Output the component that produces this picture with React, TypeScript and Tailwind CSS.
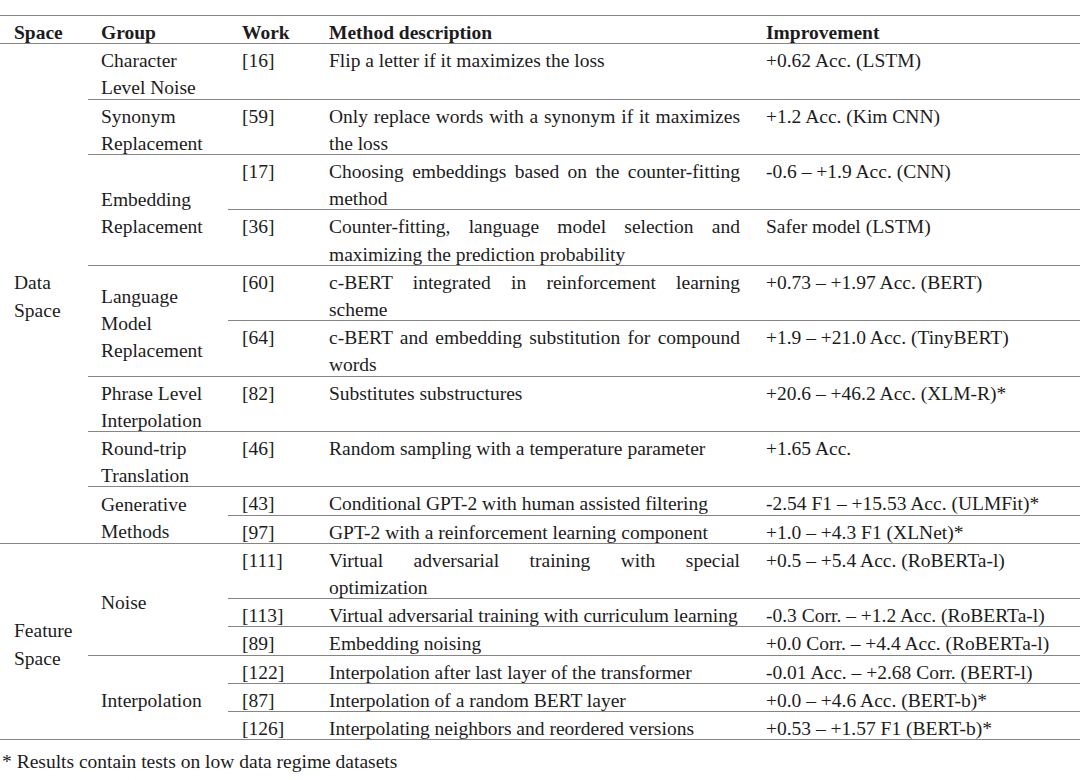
import React from 'react';

// Cell wrapper: glyphs in the reference sit low in their line box, so nudge them down
// without changing the row height.
const Txt: React.FC<{ children: React.ReactNode }> = ({ children }) => (
  <div className="pt-[3px] -mb-[3px]">{children}</div>
);

const LINE = 'border-b border-[#858585]';

interface Entry {
  work: string;
  method: string;
  result: string;
}

interface Group {
  name: React.ReactNode;
  entries: Entry[];
}

const DATA_SPACE: Group[] = [
  {
    name: (
      <>
        Character
        <br />
        Level Noise
      </>
    ),
    entries: [{ work: '[16]', method: 'Flip a letter if it maximizes the loss', result: '+0.62 Acc. (LSTM)' }],
  },
  {
    name: (
      <>
        Synonym
        <br />
        Replacement
      </>
    ),
    entries: [
      {
        work: '[59]',
        method: 'Only replace words with a synonym if it maximizes the loss',
        result: '+1.2 Acc. (Kim CNN)',
      },
    ],
  },
  {
    name: (
      <>
        Embedding
        <br />
        Replacement
      </>
    ),
    entries: [
      {
        work: '[17]',
        method: 'Choosing embeddings based on the counter-fitting method',
        result: '-0.6 – +1.9 Acc. (CNN)',
      },
      {
        work: '[36]',
        method: 'Counter-fitting, language model selection and maximizing the prediction probability',
        result: 'Safer model (LSTM)',
      },
    ],
  },
  {
    name: (
      <>
        Language
        <br />
        Model
        <br />
        Replacement
      </>
    ),
    entries: [
      {
        work: '[60]',
        method: 'c-BERT integrated in reinforcement learning scheme',
        result: '+0.73 – +1.97 Acc. (BERT)',
      },
      {
        work: '[64]',
        method: 'c-BERT and embedding substitution for compound words',
        result: '+1.9 – +21.0 Acc. (TinyBERT)',
      },
    ],
  },
  {
    name: (
      <>
        Phrase Level
        <br />
        Interpolation
      </>
    ),
    entries: [{ work: '[82]', method: 'Substitutes substructures', result: '+20.6 – +46.2 Acc. (XLM-R)*' }],
  },
  {
    name: (
      <>
        Round-trip
        <br />
        Translation
      </>
    ),
    entries: [
      { work: '[46]', method: 'Random sampling with a temperature parameter', result: '+1.65 Acc.' },
    ],
  },
  {
    name: (
      <>
        Generative
        <br />
        Methods
      </>
    ),
    entries: [
      {
        work: '[43]',
        method: 'Conditional GPT-2 with human assisted filtering',
        result: '-2.54 F1 – +15.53 Acc. (ULMFit)*',
      },
      {
        work: '[97]',
        method: 'GPT-2 with a reinforcement learning component',
        result: '+1.0 – +4.3 F1 (XLNet)*',
      },
    ],
  },
];

const FEATURE_SPACE: Group[] = [
  {
    name: 'Noise',
    entries: [
      {
        work: '[111]',
        method: 'Virtual adversarial training with special optimization',
        result: '+0.5 – +5.4 Acc. (RoBERTa-l)',
      },
      {
        work: '[113]',
        method: 'Virtual adversarial training with curriculum learning',
        result: '-0.3 Corr. – +1.2 Acc. (RoBERTa-l)',
      },
      { work: '[89]', method: 'Embedding noising', result: '+0.0 Corr. – +4.4 Acc. (RoBERTa-l)' },
    ],
  },
  {
    name: 'Interpolation',
    entries: [
      {
        work: '[122]',
        method: 'Interpolation after last layer of the transformer',
        result: '-0.01 Acc. – +2.68 Corr. (BERT-l)',
      },
      { work: '[87]', method: 'Interpolation of a random BERT layer', result: '+0.0 – +4.6 Acc. (BERT-b)*' },
      {
        work: '[126]',
        method: 'Interpolating neighbors and reordered versions',
        result: '+0.53 – +1.57 F1 (BERT-b)*',
      },
    ],
  },
];

const SpaceBlock: React.FC<{ label: React.ReactNode; groups: Group[] }> = ({ label, groups }) => {
  const total = groups.reduce((n, g) => n + g.entries.length, 0);
  return (
    <>
      {groups.map((g, gi) =>
        g.entries.map((e, ei) => (
          <tr key={`${gi}-${ei}`}>
            {gi === 0 && ei === 0 && (
              <td rowSpan={total} className={`${LINE} align-middle pl-[14px]`}>
                <Txt>{label}</Txt>
              </td>
            )}
            {ei === 0 && (
              <td rowSpan={g.entries.length} className={`${LINE} align-middle pl-[13px]`}>
                <Txt>{g.name}</Txt>
              </td>
            )}
            <td className={`${LINE} align-top pl-[14px]`}>
              <Txt>{e.work}</Txt>
            </td>
            <td className={`${LINE} align-top pl-[13px] pr-[12px] text-justify`}>
              <Txt>{e.method}</Txt>
            </td>
            <td className={`${LINE} align-top pl-[14px]`}>
              <Txt>{e.result}</Txt>
            </td>
          </tr>
        )),
      )}
    </>
  );
};

export default function App() {
  return (
    <div className="w-[1080px] h-[780px] bg-white pt-[15px] text-[#1c1c1c] text-[19.5px] leading-[27.2px] font-['Liberation_Serif','Times_New_Roman',serif]">
      <table className="w-[1080px] table-fixed border-collapse">
        <colgroup>
          <col className="w-[88px]" />
          <col className="w-[140px]" />
          <col className="w-[88px]" />
          <col className="w-[436px]" />
          <col className="w-[328px]" />
        </colgroup>
        <thead>
          <tr className="border-t border-[#858585]">
            <th className={`${LINE} text-left font-bold pl-[14px]`}>
              <Txt>Space</Txt>
            </th>
            <th className={`${LINE} text-left font-bold pl-[13px]`}>
              <Txt>Group</Txt>
            </th>
            <th className={`${LINE} text-left font-bold pl-[14px]`}>
              <Txt>Work</Txt>
            </th>
            <th className={`${LINE} text-left font-bold pl-[13px]`}>
              <Txt>Method description</Txt>
            </th>
            <th className={`${LINE} text-left font-bold pl-[14px]`}>
              <Txt>Improvement</Txt>
            </th>
          </tr>
        </thead>
        <tbody>
          <SpaceBlock
            label={
              <>
                Data
                <br />
                Space
              </>
            }
            groups={DATA_SPACE}
          />
          <SpaceBlock
            label={
              <>
                Feature
                <br />
                Space
              </>
            }
            groups={FEATURE_SPACE}
          />
        </tbody>
      </table>
      <p className="pl-[2px] pt-[8px]">* Results contain tests on low data regime datasets</p>
    </div>
  );
}
